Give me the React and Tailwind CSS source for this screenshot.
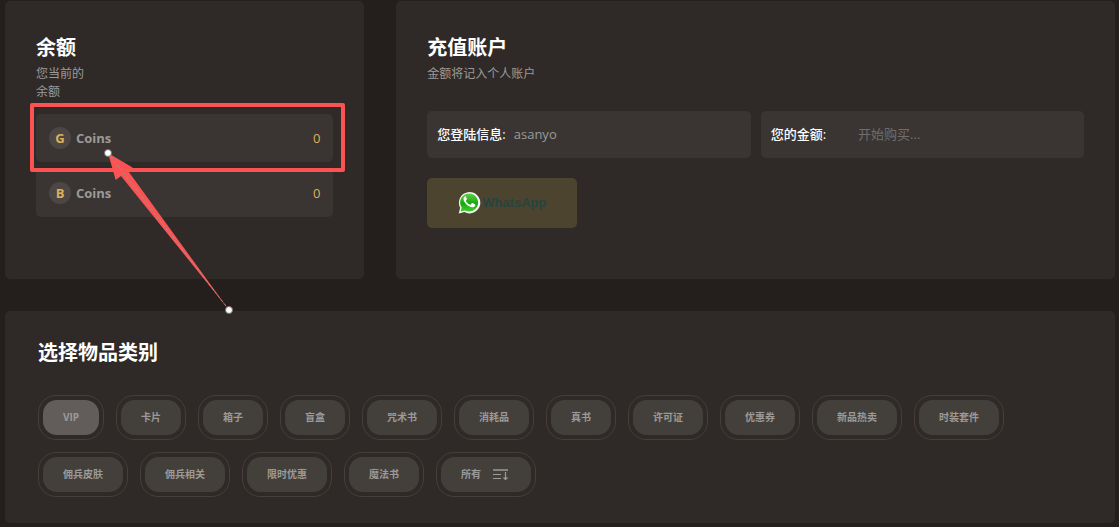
import React, { useState } from 'react';

const balances = [
    { id: 'g', letter: 'G', label: 'Coins', amount: 0, marked: true },
    { id: 'b', letter: 'B', label: 'Coins', amount: 0 },
];

const categories = [
    'VIP', '卡片', '箱子', '盲盒', '咒术书', '消耗品', '真书', '许可证', '优惠券', '新品热卖', '时装套件',
    '佣兵皮肤', '佣兵相关', '限时优惠', '魔法书', '所有',
];

function SortIcon() {
    return (
        <svg width="20" height="16" viewBox="0 0 20 16" fill="none" stroke="currentColor" aria-hidden="true">
            <path d="M2 3h15" strokeWidth="2" opacity="0.75" />
            <path d="M2 7.5h8M2 11.5h8" />
            <path d="M14.5 5v8M12.500 10.500l2 2 2-2" strokeWidth="1.2" />
        </svg>
    );
}

function WhatsAppIcon() {
    return (
        <svg width="24" height="24" viewBox="0 0 24 24" aria-hidden="true">
            <defs>
                <linearGradient id="wa-green" x1="0" y1="0" x2="0" y2="1">
                    <stop offset="0" stopColor="#5fd048" />
                    <stop offset="0.55" stopColor="#17a80f" />
                    <stop offset="1" stopColor="#3fd02c" />
                </linearGradient>
            </defs>
            <path d="M.7 22.500l1.500-5.700A10.700 10.700 0 1 1 6.500 21.100z" fill="#f4f7f2" />
            <path d="M2.700 20.500l1-3.900A9 9 0 1 1 6.800 19.400z" fill="url(#wa-green)" />
            <path
                d="M8.100 5.900c-.3-.5-.5-.6-1-.5-.9.2-1.600 1.200-1.600 2.400 0 3.600 4.600 8.200 8.600 8.500 1.600 0 2.900-.8 3.100-1.900.1-.6.1-.9-.3-1.100l-2.300-1.200c-.5-.2-.7-.1-1 .3l-.9 1.100c-.2.3-.5.3-.9.1-1.600-.7-2.900-1.900-3.800-3.400-.2-.3-.2-.6.1-.9.7-.8.9-1.100.7-1.600z"
                fill="#fff"
            />
        </svg>
    );
}

function Marker() {
    return (
        <div className="pointer-events-none absolute -inset-px z-10">
            <div className="absolute -top-2.5 -right-[11px] -bottom-[9px] -left-[5px] rounded-[2px] border-4 border-[#fb5354]" />
            <svg className="absolute top-0 left-0 overflow-visible" width="210" height="210" viewBox="35 113 210 210" aria-hidden="true">
                <path d="M108 153L132.500 167.500L128.500 171.500L229 310L121 176L115.700 180z" fill="#fb5354" />
                <path d="M108 153L229 310" stroke="#a08e8a" strokeWidth="1" strokeDasharray="3 2" />
                <circle cx="108" cy="153" r="3.500" fill="#fff" stroke="#77706d" />
                <circle cx="229" cy="310" r="3.500" fill="#fff" stroke="#77706d" />
            </svg>
        </div>
    );
}

export default function App() {
    const [active, setActive] = useState('VIP');
    const [amount, setAmount] = useState('');

    return (
        <div className="min-h-screen bg-[#241f1c] pt-px pr-1 pb-1 pl-[5px] font-['Open_Sans','Noto_Sans_CJK_SC',sans-serif] text-[#9c9a98]">
            <div className="grid grid-cols-[1fr_2fr] gap-8">
                <section className="rounded-[5px] bg-[#2f2a28] p-[31px]">
                    <h2 className="text-xl leading-8 font-bold text-white">余额</h2>
                    <p className="mt-px w-12 text-xs leading-[18px]">您当前的余额</p>
                    <ul className="mt-[13px] space-y-[7px]">
                        {balances.map((item) => (
                            <li key={item.id} className="relative flex h-12 items-center rounded-[5px] bg-[#3a3532] px-[13px] text-[13px] leading-[22px]">
                                <span className="mr-[5px] size-[22px] rounded-full bg-[#4c4744] text-center font-bold text-[#dcb05c]">
                                    {item.letter}
                                </span>
                                <span className="font-bold">{item.label}</span>
                                <span className="ml-auto text-[#dcb05c]">{item.amount}</span>
                                {item.marked && <Marker />}
                            </li>
                        ))}
                    </ul>
                </section>

                <section className="rounded-[5px] bg-[#2f2a28] px-[31px] pt-[31px] pb-[51px]">
                    <h2 className="text-xl leading-8 font-bold text-white">充值账户</h2>
                    <p className="mt-px text-xs leading-[18px]">金额将记入个人账户</p>
                    <div className="mt-7 grid grid-cols-2 gap-2.5 text-[13px]">
                        <div className="flex h-[47px] items-center gap-2 rounded-[5px] bg-[#3a3532] px-2.5">
                            <label htmlFor="login" className="shrink-0 font-medium text-white">您登陆信息:</label>
                            <input id="login" readOnly value="asanyo" className="min-w-0 flex-1 bg-transparent outline-none" />
                        </div>
                        <div className="flex h-[47px] items-center gap-8 rounded-[5px] bg-[#3a3532] px-2.5">
                            <label htmlFor="amount" className="shrink-0 font-medium text-white">您的金额:</label>
                            <input
                                id="amount"
                                value={amount}
                                onChange={(e) => setAmount(e.target.value)}
                                placeholder="开始购买..."
                                className="min-w-0 flex-1 bg-transparent outline-none placeholder:text-[#6f6d6c]"
                            />
                        </div>
                    </div>
                    <button className="mt-5 flex h-[50px] w-[150px] items-center justify-center rounded-[5px] bg-[#4d4430] font-['Liberation_Sans',sans-serif] text-[13px] font-bold text-[#26443f]">
                        <WhatsAppIcon />
                        WhatsApp
                    </button>
                </section>
            </div>

            <section className="mt-8 rounded-[5px] bg-[#2f2a28] px-[33px] py-[26px]">
                <h2 className="text-xl leading-8 font-bold text-white">选择物品类别</h2>
                <div className="mt-[26px] flex flex-wrap gap-3">
                    {categories.map((name) => (
                        <div key={name} className="rounded-[18px] border border-[#443f3c] p-1">
                            <button
                                onClick={() => setActive(name)}
                                className={`flex h-[35px] items-center gap-2.5 rounded-[14px] px-5 text-[10px] font-bold ${active === name ? 'bg-[#625d5b]' : 'bg-[#43403c]'}`}
                            >
                                {name}
                                {name === '所有' && <SortIcon />}
                            </button>
                        </div>
                    ))}
                </div>
            </section>
        </div>
    );
}
